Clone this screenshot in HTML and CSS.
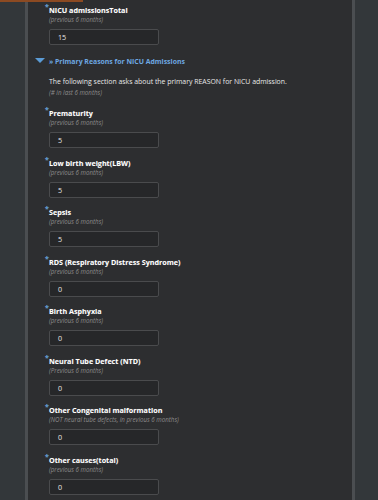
FILE: index.html
```html
<!DOCTYPE html>
<html>
<head>
<meta charset="utf-8">
<link rel="stylesheet" href="styles.css">
</head>
<body>
<div class="topline"></div>
<div class="page">
  <div class="panel">
    <div class="field first">
      <div class="label"><span class="req">*</span>NICU admissionsTotal</div>
      <div class="hint">(previous 6 months)</div>
      <div class="input">15</div>
    </div>

    <div class="section">
      <div class="section-title"><span class="tri"></span><span class="title-text">» Primary Reasons for NICU Admissions</span></div>
      <div class="desc">The following section asks about the primary REASON for NICU admission.</div>
      <div class="hint desc-hint">(# in last 6 months)</div>
    </div>

    <div class="field">
      <div class="label"><span class="req">*</span>Prematurity</div>
      <div class="hint">(previous 6 months)</div>
      <div class="input">5</div>
    </div>
    <div class="field">
      <div class="label"><span class="req">*</span>Low birth weight(LBW)</div>
      <div class="hint">(previous 6 months)</div>
      <div class="input">5</div>
    </div>
    <div class="field">
      <div class="label"><span class="req">*</span>Sepsis</div>
      <div class="hint">(previous 6 months)</div>
      <div class="input">5</div>
    </div>
    <div class="field">
      <div class="label"><span class="req">*</span>RDS (Respiratory Distress Syndrome)</div>
      <div class="hint">(previous 6 months)</div>
      <div class="input">0</div>
    </div>
    <div class="field">
      <div class="label"><span class="req">*</span>Birth Asphyxia</div>
      <div class="hint">(previous 6 months)</div>
      <div class="input">0</div>
    </div>
    <div class="field">
      <div class="label"><span class="req">*</span>Neural Tube Defect (NTD)</div>
      <div class="hint">(Previous 6 months)</div>
      <div class="input">0</div>
    </div>
    <div class="field">
      <div class="label"><span class="req">*</span>Other Congenital malformation</div>
      <div class="hint">(NOT neural tube defects, in previous 6 months)</div>
      <div class="input">0</div>
    </div>
    <div class="field">
      <div class="label"><span class="req">*</span>Other causes(total)</div>
      <div class="hint">(previous 6 months)</div>
      <div class="input">0</div>
    </div>
  </div>
</div>
</body>
</html>
```

FILE: styles.css
```css
html, body {
  margin: 0;
  padding: 0;
  height: 500px;
  overflow: hidden;
  background: #33373a;
  font-family: "Open Sans", "DejaVu Sans", sans-serif;
}
.topline {
  position: absolute;
  left: 0;
  top: 0;
  width: 83px;
  height: 2px;
  background: #8c4a22;
}
.page {
  padding-left: 25px;
  width: 330px;
  height: 500px;
}
.panel {
  box-sizing: border-box;
  width: 330px;
  height: 500px;
  background: #2d2e30;
  border-left: 3px solid #4b4e51;
  border-right: 3px solid #4b4e51;
  padding-left: 21px;
}
.field {
  height: 49.5px;
  padding-top: 5px;
  box-sizing: border-box;
}
.field.first {
  height: 51px;
}
.label {
  position: relative;
  font-weight: 700;
  font-size: 7.2px;
  line-height: 10px;
  color: #ffffff;
  text-shadow: 0 0 1px rgba(255, 255, 255, 0.25);
}
.req {
  position: absolute;
  left: -4px;
  top: -3px;
  color: #5b9bd5;
  font-size: 7px;
  font-weight: 700;
}
.hint {
  font-style: italic;
  font-size: 6.2px;
  line-height: 9px;
  color: #8d8d8d;
}
.input {
  box-sizing: border-box;
  margin-top: 5px;
  width: 110px;
  height: 16px;
  background: #262729;
  border: 1px solid #4a4b4d;
  border-radius: 2px;
  color: #e6e6e6;
  font-size: 7.2px;
  line-height: 14px;
  padding-left: 8px;
}
.section {
  height: 52px;
  padding-top: 4px;
  box-sizing: border-box;
}
.section-title {
  position: relative;
  height: 12px;
  display: flex;
  align-items: center;
}
.tri {
  position: absolute;
  left: -14px;
  top: 3px;
  width: 0;
  height: 0;
  border-left: 5px solid transparent;
  border-right: 5px solid transparent;
  border-top: 5px solid #5b9bd5;
}
.title-text {
  font-weight: 700;
  font-size: 6.9px;
  color: #6ea8e2;
}
.desc {
  margin-top: 10px;
  font-size: 6.9px;
  line-height: 10px;
  color: #e8e8e8;
}
.desc-hint {
  margin-top: 1px;
}
```
